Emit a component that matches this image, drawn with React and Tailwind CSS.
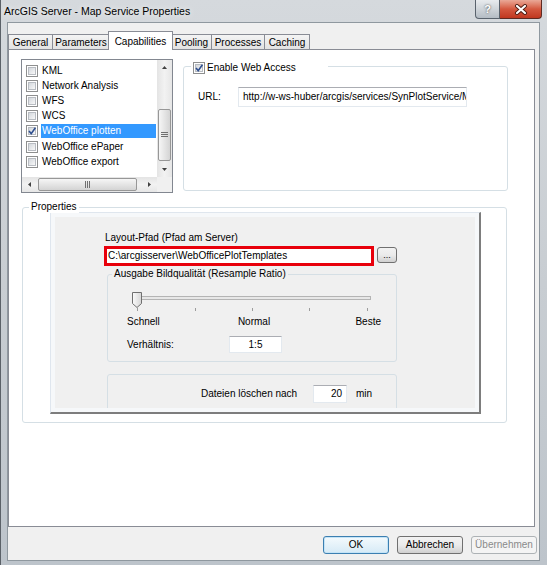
import React from 'react';

const tabs = [
  { label: 'General', cls: 'w-[45px]' },
  { label: 'Parameters', cls: '-ml-px w-[58px]' },
  { label: 'Capabilities', cls: '-ml-[2px] w-[65px]', active: true },
  { label: 'Pooling', cls: '-ml-[2px] w-[41px]' },
  { label: 'Processes', cls: '-ml-px w-[54px]' },
  { label: 'Caching', cls: '-ml-px w-[46px]' },
];

const items = [
  { label: 'KML' },
  { label: 'Network Analysis' },
  { label: 'WFS' },
  { label: 'WCS' },
  { label: 'WebOffice plotten', checked: true, selected: true },
  { label: 'WebOffice ePaper' },
  { label: 'WebOffice export' },
];

function CheckBox({ checked }) {
  return (
    <span className="relative flex h-[12px] w-[12px] shrink-0 items-center justify-center border border-[#8e8f8f] bg-white">
      <span className="h-[8px] w-[8px] border border-[#b8bcc2] bg-gradient-to-br from-[#d3d7dc] to-[#f8f8f8]" />
      {checked && (
        <svg className="absolute inset-0" width="10" height="10" viewBox="0 0 10 10">
          <path d="M2 5 L4.2 7.6 L8.4 1.8" fill="none" stroke="#2f4f8f" strokeWidth="1.6" />
        </svg>
      )}
    </span>
  );
}

function Arrow({ dir }) {
  const horiz = dir === 'left' || dir === 'right';
  const d = {
    up: 'M0 3 L2.5 0 L5 3 Z',
    down: 'M0 0 L5 0 L2.5 3 Z',
    left: 'M3 0 L3 5 L0 2.5 Z',
    right: 'M0 0 L3 2.5 L0 5 Z',
  }[dir];
  return (
    <svg width={horiz ? 3 : 5} height={horiz ? 5 : 3} viewBox={horiz ? '0 0 3 5' : '0 0 5 3'}>
      <path d={d} fill="#404040" />
    </svg>
  );
}

function TextBox({ className, children }) {
  return (
    <div className={`flex items-center overflow-hidden whitespace-nowrap border border-[#e3e9ef] border-t-[#abadb3] bg-white ${className}`}>
      {children}
    </div>
  );
}

function Slider() {
  const ticks = [5, 63, 120, 177, 235];
  return (
    <svg width="245" height="20" viewBox="0 0 245 20" className="ml-[24px] mt-[17px] block">
      <defs>
        <linearGradient id="thumb" x1="0" y1="0" x2="1" y2="0">
          <stop offset="0" stopColor="#fbfbfb" />
          <stop offset="1" stopColor="#d6d6d6" />
        </linearGradient>
      </defs>
      <rect x="5.5" y="4.5" width="233" height="3" fill="#e7e7e7" stroke="#b4b4b4" />
      {ticks.map((x) => (
        <line key={x} x1={x + 0.5} y1="16" x2={x + 0.5} y2="19" stroke="#9c9c9c" />
      ))}
      <path d="M0.5 0.5 H9.5 V11.5 L5 15.5 L0.5 11.5 Z" fill="url(#thumb)" stroke="#707070" />
    </svg>
  );
}

function WinButton({ children, variant }) {
  const styles = {
    default:
      'border-[#3c7fb1] bg-gradient-to-b from-[#f4fafd] to-[#d6eaf6] shadow-[inset_0_0_0_1px_#c4e4f7] text-black',
    normal: 'border-[#707070] bg-gradient-to-b from-[#f2f2f2] via-[#ebebeb] to-[#d0d0d0] text-black',
    disabled: 'border-[#adb2b5] bg-[#f4f4f4] text-[#8a8a8a]',
  }[variant];
  return (
    <div className={`flex h-[18px] w-[66px] items-center justify-center rounded-[3px] border ${styles}`}>
      {children}
    </div>
  );
}

export default function App() {
  return (
    <div className="flex h-[565px] w-[547px] flex-col overflow-hidden border-l border-[#5b6168] bg-gradient-to-b from-[#d5d9dd] via-[#c8cdd2] to-[#bdc4cb] font-['Liberation_Sans',Arial,sans-serif] text-[10px] leading-[12px] text-black">
      {/* title bar */}
      <div className="flex h-[22px] shrink-0 items-start">
        <div className="flex h-[22px] flex-1 items-center pl-[3px] text-[10.5px] [text-shadow:0_0_6px_#fff]">
          ArcGIS Server - Map Service Properties
        </div>
        <div className="mr-[5px] flex">
          <div className="flex h-[19px] w-[25px] items-center justify-center rounded-bl-[4px] border border-t-0 border-[#59626c] bg-gradient-to-b from-[#e8ebee] via-[#cfd4d9] to-[#b4bcc4] text-[11px] font-bold text-white [text-shadow:0_0_2px_#333]">
            ?
          </div>
          <div className="flex h-[19px] w-[42px] items-center justify-center rounded-br-[4px] border border-l-0 border-t-0 border-[#5e2a22] bg-gradient-to-b from-[#e9a897] via-[#d4583f] to-[#c0371f]">
            <svg width="14" height="11" viewBox="0 0 14 11">
              <path d="M3 2 L11 9 M11 2 L3 9" stroke="#4c1b12" strokeWidth="4" strokeLinecap="round" />
              <path d="M3 2 L11 9 M11 2 L3 9" stroke="#fff" strokeWidth="2.2" strokeLinecap="round" />
            </svg>
          </div>
        </div>
      </div>

      {/* client area */}
      <div className="ml-[6px] mr-[7px] flex h-[539px] shrink-0 flex-col border border-[#8f989f] bg-[#f0f0f0]">
        <div className="mt-[8px] flex h-[18px] items-end">
          {tabs.map((t) =>
            t.active ? (
              <div
                key={t.label}
                className={`relative z-10 -mb-px flex h-[19px] items-center justify-center border border-b-0 border-[#898c95] bg-white pt-[1px] ${t.cls}`}
              >
                {t.label}
              </div>
            ) : (
              <div
                key={t.label}
                className={`flex h-[15px] items-center justify-center border border-b-0 border-[#898c95] bg-gradient-to-b from-[#f4f4f4] to-[#e2e2e2] pt-[1px] ${t.cls}`}
              >
                {t.label}
              </div>
            )
          )}
        </div>

        {/* tab page */}
        <div className="h-[478px] w-[527px] border border-[#898c95] bg-white">
          <div className="flex items-start pl-[12px] pt-[9px]">
            {/* list box */}
            <div className="flex h-[134px] w-[152px] flex-col border border-[#828790] bg-white">
              <div className="flex min-h-0 flex-1">
                <div className="flex-1 pt-[3px]">
                  {items.map((it) => (
                    <div key={it.label} className="flex h-[15.2px] items-center">
                      <span className="ml-[4px]">
                        <CheckBox checked={it.checked} />
                      </span>
                      <span
                        className={`ml-[3px] mr-[1px] h-[14px] flex-1 whitespace-nowrap pl-[1px] leading-[14px] ${
                          it.selected ? 'bg-[#3399ff] text-white' : ''
                        }`}
                      >
                        {it.label}
                      </span>
                    </div>
                  ))}
                </div>
                <div className="flex w-[15px] flex-col bg-gradient-to-r from-[#e4e4e4] via-[#f2f2f2] to-[#e6e6e6]">
                  <div className="flex h-[15px] items-center justify-center">
                    <Arrow dir="up" />
                  </div>
                  <div className="flex-1 px-[1px] pt-[34px]">
                    <div className="flex h-[52px] items-center justify-center rounded-[2px] border border-[#979797] bg-gradient-to-r from-[#f6f6f6] to-[#d4d4d4]">
                      <svg width="7" height="6" viewBox="0 0 7 6">
                        <path d="M0 0.5 H7 M0 2.5 H7 M0 4.5 H7" stroke="#707070" />
                      </svg>
                    </div>
                  </div>
                  <div className="flex h-[15px] items-center justify-center">
                    <Arrow dir="down" />
                  </div>
                </div>
              </div>
              <div className="flex h-[15px] shrink-0">
                <div className="flex flex-1 bg-gradient-to-b from-[#e4e4e4] via-[#f2f2f2] to-[#e6e6e6]">
                  <div className="flex w-[15px] items-center justify-center">
                    <Arrow dir="left" />
                  </div>
                  <div className="flex-1 py-[1px] pl-[1px]">
                    <div className="flex h-full w-[99px] items-center justify-center rounded-[2px] border border-[#979797] bg-gradient-to-b from-[#f6f6f6] to-[#d4d4d4]">
                      <svg width="6" height="7" viewBox="0 0 6 7">
                        <path d="M0.5 0 V7 M2.5 0 V7 M4.5 0 V7" stroke="#707070" />
                      </svg>
                    </div>
                  </div>
                  <div className="flex w-[15px] items-center justify-center">
                    <Arrow dir="right" />
                  </div>
                </div>
                <div className="w-[15px] bg-[#f0f0f0]" />
              </div>
            </div>

            {/* web access group */}
            <div className="relative ml-[10px] mt-[7px] h-[125px] w-[325px] rounded-[3px] border border-[#d5dfe5]">
              <div className="absolute left-[7px] top-[-5px] flex w-[137px] items-center bg-white pl-[2px]">
                <CheckBox checked />
                <span className="ml-[2px]">Enable Web Access</span>
              </div>
              <div className="mt-[20px] flex items-center pl-[14px]">
                <span className="w-[40px]">URL:</span>
                <TextBox className="h-[20px] w-[229px] pl-[4px]">
                  http://w-ws-huber/arcgis/services/SynPlotService/M
                </TextBox>
              </div>
            </div>
          </div>

          {/* properties group */}
          <div className="relative ml-[13px] mt-[14px] h-[216px] w-[485px] rounded-[3px] border border-[#d5dfe5]">
            <div className="absolute left-[6px] top-[-7px] bg-white px-[2px]">Properties</div>
            <div className="ml-[27px] mt-[4px] h-[202px] w-[431px] border-b-2 border-l border-r-2 border-t border-[#dfe6ee] border-b-[#7d7d7d] border-r-[#7d7d7d] bg-[#f6f8fa] p-[4px]">
              <div className="h-full overflow-hidden bg-[#f0f0f0]">
                <div className="ml-[50px] mt-[15px]">Layout-Pfad (Pfad am Server)</div>
                <div className="ml-[49px] mt-[2px] flex items-start">
                  <div className="flex h-[20px] w-[270px] items-center overflow-hidden whitespace-nowrap border-[3px] border-[#e8000b] bg-white pl-[1px]">
                    {'C:\\arcgisserver\\WebOfficePlotTemplates'}
                  </div>
                  <div className="ml-[3px] mt-[1px] flex h-[16px] w-[20px] items-end justify-center rounded-[3px] border border-[#707070] bg-gradient-to-b from-[#f2f2f2] via-[#ebebeb] to-[#d0d0d0] pb-[2px] text-[9px] leading-[9px]">
                    ...
                  </div>
                </div>

                {/* Bildqualität group */}
                <div className="relative ml-[52px] mt-[8px] h-[88px] w-[290px] rounded-[3px] border border-[#d5dfe5]">
                  <div className="absolute left-[4px] top-[-7px] bg-[#f0f0f0] px-[2px]">
                    Ausgabe Bildqualität (Resample Ratio)
                  </div>
                  <Slider />
                  <div className="ml-[19px] mt-[4px] grid w-[254px] grid-cols-3">
                    <span>Schnell</span>
                    <span className="text-center">Normal</span>
                    <span className="text-right">Beste</span>
                  </div>
                  <div className="ml-[19px] mt-[8px] flex items-center">
                    <span className="w-[102px]">Verhältnis:</span>
                    <TextBox className="h-[17px] w-[53px] justify-center">1:5</TextBox>
                  </div>
                </div>

                {/* delete group */}
                <div className="ml-[52px] mt-[12px] h-[50px] w-[290px] rounded-[3px] border border-[#d5dfe5]">
                  <div className="mt-[10px] flex items-center pl-[93px]">
                    <span className="w-[112px]">Dateien löschen nach</span>
                    <TextBox className="h-[18px] w-[34px] justify-end pr-[4px]">20</TextBox>
                    <span className="ml-[9px]">min</span>
                  </div>
                </div>
              </div>
            </div>
          </div>
        </div>

        {/* dialog buttons */}
        <div className="mt-[9px] flex justify-end gap-[8px] pr-[2px]">
          <WinButton variant="default">OK</WinButton>
          <WinButton variant="normal">Abbrechen</WinButton>
          <WinButton variant="disabled">Übernehmen</WinButton>
        </div>
      </div>
    </div>
  );
}
